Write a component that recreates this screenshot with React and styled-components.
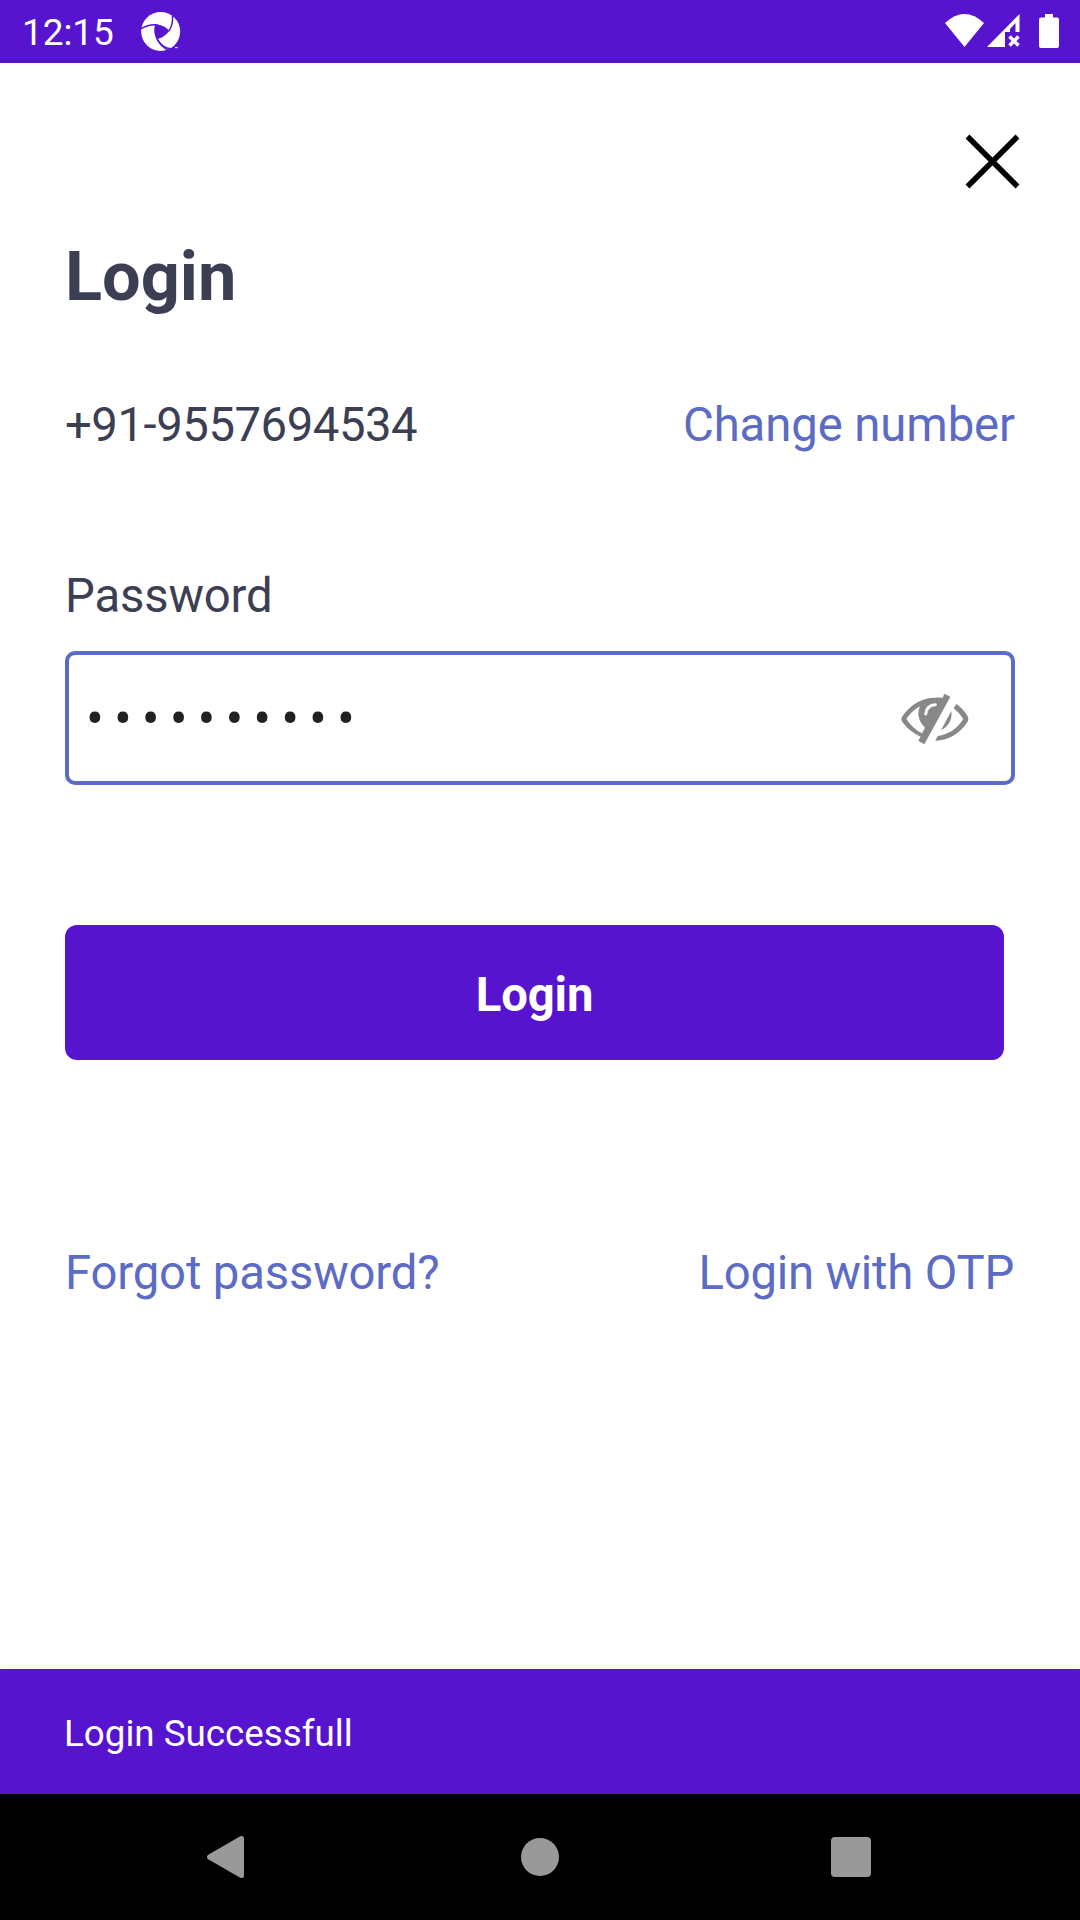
import React from "react";
import styled, { createGlobalStyle } from "styled-components";

const PURPLE = "#5614cf";
const INK = "#3c3f54";
const LINK = "#5c6bc5";

const GlobalStyle = createGlobalStyle`
  *, *::before, *::after { box-sizing: border-box; }
  body { margin: 0; background: #fff; font-family: Roboto, sans-serif; }
`;

const Screen = styled.div`
  width: 1080px;
  height: 1920px;
  display: flex;
  flex-direction: column;
  background: #fff;
  overflow: hidden;
`;

const StatusBar = styled.header`
  height: 63px;
  flex: none;
  display: flex;
  align-items: flex-start;
  padding: 0 21px 0 22px;
  background: ${PURPLE};
  color: #fff;
`;

const Clock = styled.span`
  width: 119px;
  font-size: 37px;
  line-height: 66px;
  letter-spacing: -0.1px;
`;

const AppBadge = styled.svg`
  margin-top: 12px;
`;

const StatusIcons = styled.div`
  margin-left: auto;
  padding-top: 14px;
  display: flex;
`;

const StatusIcon = styled.svg`
  margin-left: ${(p) => p.$gap || 0}px;
  fill: #fff;
`;

const Content = styled.main`
  flex: 1;
  display: flex;
  flex-direction: column;
  padding: 71px 65px 0;
`;

const CloseButton = styled.button`
  align-self: flex-end;
  width: 56px;
  height: 56px;
  margin-right: -6px;
  padding: 0;
  border: 0;
  background: none;
  display: block;

  svg { display: block; }
`;

const Title = styled.h1`
  margin: 47px 0 0;
  font-size: 68.5px;
  line-height: 80px;
  font-weight: 700;
  color: ${INK};
`;

const Row = styled.div`
  display: flex;
  justify-content: space-between;
  margin-top: ${(p) => p.$top}px;
  font-size: 47.25px;
  line-height: 56px;
  color: ${INK};
`;

const Phone = styled.span`
  letter-spacing: -0.45px;
`;

const Link = styled.a`
  color: ${LINK};
  letter-spacing: ${(p) => p.$tracking || 0}px;
  margin-right: ${(p) => p.$inset || 0}px;
`;

const Label = styled.label`
  margin-top: 115px;
  font-size: 47.25px;
  line-height: 56px;
  letter-spacing: -0.15px;
  color: ${INK};
`;

const Field = styled.div`
  height: 134px;
  margin-top: 27px;
  padding: 2px 42px 0 17px;
  display: flex;
  align-items: center;
  justify-content: space-between;
  border: 4px solid ${LINK};
  border-radius: 10px;
`;

const Mask = styled.span`
  font-size: 53px;
  line-height: 56px;
  letter-spacing: 10px;
  color: #212121;
`;

const Submit = styled.button`
  width: 939px;
  height: 135px;
  margin-top: 140px;
  padding: 4px 0 0;
  border: 0;
  border-radius: 12px;
  background: ${PURPLE};
  color: #fff;
  font-family: inherit;
  font-size: 47.25px;
  font-weight: 700;
  letter-spacing: -0.15px;
`;

const Snackbar = styled.div`
  height: 125px;
  flex: none;
  padding: 3px 64px 0;
  display: flex;
  align-items: center;
  background: ${PURPLE};
  box-shadow: 0 0 8px rgba(0, 0, 0, 0.08);
  color: #fff;
  font-size: 36.75px;
`;

const NavBar = styled.nav`
  height: 126px;
  flex: none;
  display: flex;
  align-items: center;
  justify-content: space-between;
  padding: 0 209px 0 207px;
  background: #000;
`;

const HomeDot = styled.span`
  width: 38px;
  height: 38px;
  margin-left: 5px;
  border-radius: 50%;
  background: #999;
`;

const RecentSquare = styled.span`
  width: 40px;
  height: 40px;
  border-radius: 4px;
  background: #999;
`;

const BackIcon = () => (
  <svg width="37" height="42" viewBox="0 0 37 42">
    <path d="M2.5 21L34.5 2.5V39.500Z" fill="#999" stroke="#999" strokeWidth="5" strokeLinejoin="round" />
  </svg>
);

const ShutterIcon = () => (
  <AppBadge width="40" height="40" viewBox="0 0 120 120">
    <circle cx="59" cy="58.500" r="58.500" fill="#fff" />
    <path d="M44 40Q66 36 85 57Q68 78 47 81Q40 59 44 40Z" fill={PURPLE} />
    <g fill="none" stroke={PURPLE} strokeWidth="4.500">
      <path d="M0 50Q25 35 52 39" />
      <path d="M94 10Q98 34 84 57" />
      <path d="M44 39Q38 62 49 82Q60 103 82 115" />
      <path d="M49 82Q66 112 98 110" />
    </g>
    <path d="M80 120Q90 106 108 104L120 90V120Z" fill={PURPLE} />
    <path d="M102 107H110" stroke="#fff" strokeWidth="3" />
  </AppBadge>
);

const EyeSlashIcon = () => (
  <svg width="68" height="52" viewBox="62 160 204 156">
    <path
      fill="#888"
      fillRule="evenodd"
      d="M192 162L210 171L132 314L114 303L121 291Q87 276 66 247Q60 239 66 230Q105 174 165 174Q176 173 187 174ZM119 200Q95 213 78 238Q97 267 125 281L134 264Q104 234 119 200Z"
    />
    <path fill="#888" d="M228 193Q248 206 262 230Q266 238 262 246Q226 300 165 303L172 289Q221 282 249 238Q237 219 220 206Z" />
    <path fill="#888" d="M213 214Q218 252 182 272Z" />
    <path fill="none" stroke="#fff" strokeWidth="9" strokeLinecap="round" d="M136 223Q139 196 165 195" />
  </svg>
);

export default function App() {
  return (
    <>
      <GlobalStyle />
      <Screen>
        <StatusBar>
          <Clock>12:15</Clock>
          <ShutterIcon />
          <StatusIcons>
            <StatusIcon width="39" height="33" viewBox="0 0 39 33">
              <path d="M0 9Q19.500 -9 39 9L19.500 33Z" />
            </StatusIcon>
            <StatusIcon $gap={3} width="33" height="33" viewBox="0 0 33 33">
              <path d="M32.500 0V18H28.500V9L23 15V18H18V33H0Z" />
              <path d="M22.500 22.500L31.500 31.500M31.500 22.500L22.500 31.500" stroke="#fff" strokeWidth="3.500" />
            </StatusIcon>
            <StatusIcon $gap={19} width="20" height="34" viewBox="0 0 20 34">
              <path d="M6 0H14V3.500H18Q20 3.500 20 5.500V32Q20 34 18 34H2Q0 34 0 32V5.500Q0 3.500 2 3.500H6Z" />
            </StatusIcon>
          </StatusIcons>
        </StatusBar>
        <Content>
          <CloseButton aria-label="Close">
            <svg width="56" height="56" viewBox="0 0 56 56">
              <path d="M2.500 2.500L52.500 52.500M52.500 2.500L2.500 52.500" stroke="#000" strokeWidth="5.500" />
            </svg>
          </CloseButton>
          <Title>Login</Title>
          <Row $top={80}>
            <Phone>+91-9557694534</Phone>
            <Link $tracking={-0.08}>Change number</Link>
          </Row>
          <Label>Password</Label>
          <Field>
            <Mask>••••••••••</Mask>
            <EyeSlashIcon />
          </Field>
          <Submit>Login</Submit>
          <Row $top={185}>
            <Link $tracking={-0.15}>Forgot password?</Link>
            <Link $tracking={-0.2} $inset={1}>Login with OTP</Link>
          </Row>
        </Content>
        <Snackbar>Login Successfull</Snackbar>
        <NavBar>
          <BackIcon />
          <HomeDot />
          <RecentSquare />
        </NavBar>
      </Screen>
    </>
  );
}
